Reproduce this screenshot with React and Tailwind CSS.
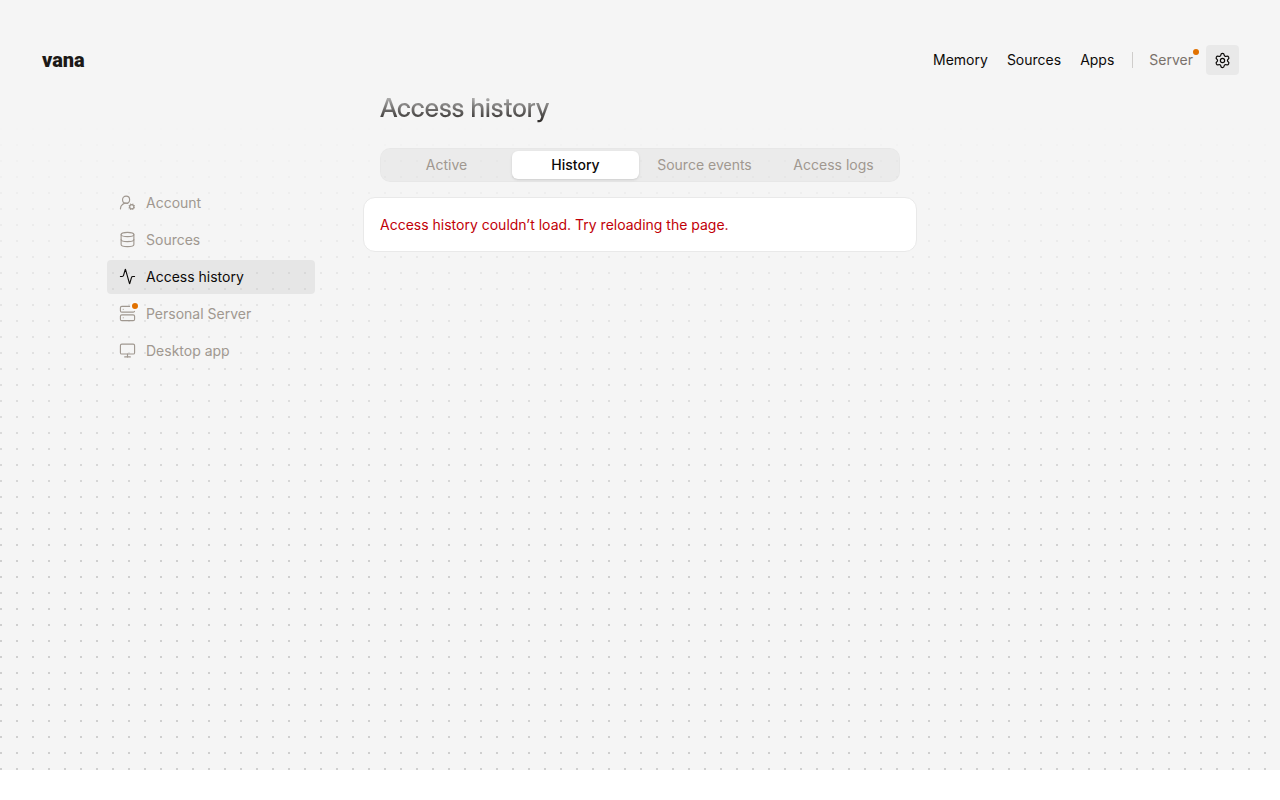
import { Activity, Database, Monitor, Server, Settings, UserRoundCog } from "lucide-react";

const tabs = ["Active", "History", "Source events", "Access logs"];

const sections = [
  { label: "Account", Icon: UserRoundCog },
  { label: "Sources", Icon: Database },
  { label: "Access history", Icon: Activity, current: true },
  { label: "Personal Server", Icon: Server, alert: true },
  { label: "Desktop app", Icon: Monitor },
];

function Header() {
  return (
    <header className="flex h-[90px] items-end justify-between pr-[41px] pb-[15px] pl-[42px]">
      <a
        href="#home"
        className="flex h-[30px] items-center font-['Roboto',sans-serif] text-[20px] leading-none font-black text-[#1c1917]"
      >
        vana
      </a>
      <nav aria-label="Main" className="flex h-[30px] items-center text-[14px] leading-5">
        <div className="flex items-center gap-[19px]">
          <a href="#memory">Memory</a>
          <a href="#sources">Sources</a>
          <a href="#apps">Apps</a>
        </div>
        <div className="mr-4 ml-[18px] h-4 w-px bg-[#cfcdcb]" />
        <a href="#server" className="relative mr-[13px] text-[#79716b]">
          Server
          <span className="absolute -top-[1px] -right-[6px] size-[6px] rounded-full bg-[#e17100]" />
        </a>
        <button
          type="button"
          aria-label="Settings"
          className="flex h-[30px] w-[33px] items-center justify-center rounded-[4px] bg-[#e9e9e9]"
        >
          <Settings size={17} strokeWidth={1.7} />
        </button>
      </nav>
    </header>
  );
}

function Sidebar() {
  return (
    <nav aria-label="Settings" className="mt-[96px] mr-[65px] flex w-[208px] flex-col gap-[3px] justify-self-end">
      {sections.map(({ label, Icon, current, alert }) => (
        <a
          key={label}
          href="#section"
          aria-current={current ? "page" : undefined}
          className={
            current
              ? "flex h-[34px] items-center gap-[10px] rounded-[4px] bg-black/6 px-3 text-[#0c0a09]"
              : "flex h-[34px] items-center gap-[10px] rounded-[4px] px-3 text-[#a09890]"
          }
        >
          <span className="relative pb-px">
            <Icon size={17} strokeWidth={1.6} />
            {alert && (
              <span className="absolute -top-[4px] -right-1 size-[10px] rounded-full border-2 border-[#f9f9f9] bg-[#e17100]" />
            )}
          </span>
          {label}
        </a>
      ))}
    </nav>
  );
}

export default function App() {
  return (
    <div className="relative isolate min-h-[calc(100vh-30px)] bg-[#f5f5f5] font-['Inter',sans-serif] text-[14px] leading-5 text-[#0c0a09]">
      <div className="absolute inset-0 -z-10 bg-[radial-gradient(circle_at_1px_1px,#cfcfcf_1px,transparent_0)] bg-size-[16px_16px] [mask-image:linear-gradient(to_bottom,transparent_120px,black_560px)]" />
      <Header />
      <div className="grid grid-cols-[1fr_520px_1fr]">
        <Sidebar />
        <main>
          <h1 className="bg-linear-to-b from-[#c8c8c8] from-10% to-[#1c1917] bg-clip-text font-['Inter_Display','Inter',sans-serif] text-[26px] leading-9 font-medium text-transparent">
            Access history
          </h1>
          <div
            role="tablist"
            className="mt-[22px] grid h-[34px] grid-cols-4 gap-[2px] rounded-[10px] border border-black/2 bg-black/4 p-[2px]"
          >
            {tabs.map((tab) => (
              <button
                key={tab}
                type="button"
                role="tab"
                aria-selected={tab === "History"}
                className={
                  tab === "History"
                    ? "rounded-[6px] bg-white font-medium shadow-sm"
                    : "rounded-[6px] text-[#a09890]"
                }
              >
                {tab}
              </button>
            ))}
          </div>
          <section className="-mx-[17px] mt-[15px] rounded-[12px] border border-[#e9e9e9] bg-white p-4 leading-[21px] text-[#c10007]">
            <p role="alert">Access history couldn’t load. Try reloading the page.</p>
          </section>
        </main>
      </div>
    </div>
  );
}
